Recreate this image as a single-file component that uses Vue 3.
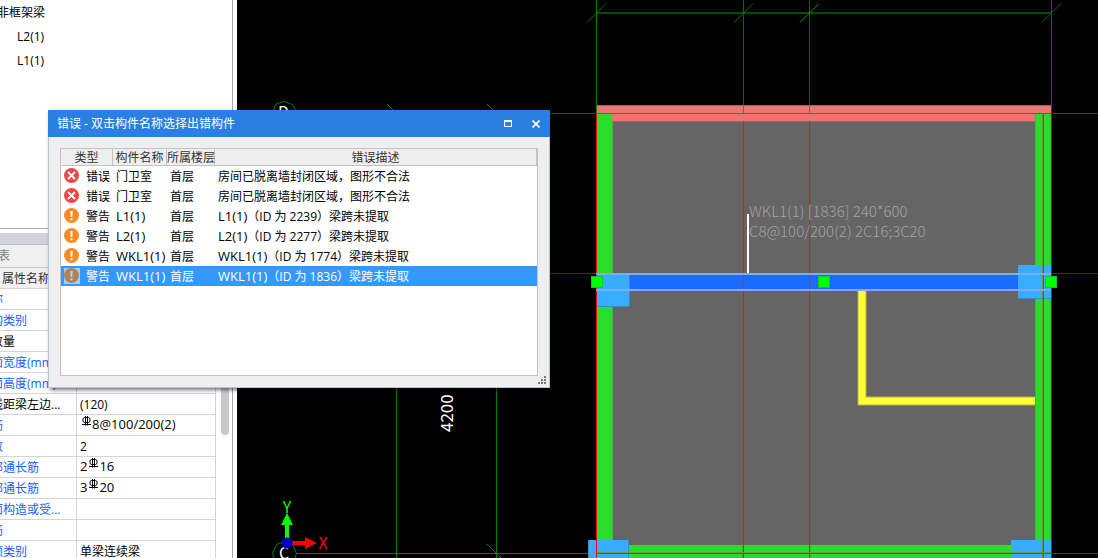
<script setup>
import { ref } from 'vue'

const tree = [
  { name: '非框架梁', level: 0 },
  { name: 'L2(1)', level: 1 },
  { name: 'L1(1)', level: 1 },
]

const properties = [
  { name: '名称', value: [], link: true },
  { name: '结构类别', value: [], link: true },
  { name: '跨数量', value: [] },
  { name: '截面宽度(mm)', value: [], link: true },
  { name: '截面高度(mm)', value: [], link: true },
  { name: '轴线距梁左边...', value: ['(120)'] },
  { name: '箍筋', value: ['', '8@100/200(2)'], link: true },
  { name: '肢数', value: ['2'], link: true },
  { name: '上部通长筋', value: ['2', '16'], link: true },
  { name: '下部通长筋', value: ['3', '20'], link: true },
  { name: '侧面构造或受...', value: [], link: true },
  { name: '拉筋', value: [], link: true },
  { name: '定额类别', value: ['单梁连续梁'], link: true },
]

const issues = [
  { kind: 'error', type: '错误', name: '门卫室', floor: '首层', text: ['', '房间已脱离墙封闭区域，图形不合法'] },
  { kind: 'error', type: '错误', name: '门卫室', floor: '首层', text: ['', '房间已脱离墙封闭区域，图形不合法'] },
  { kind: 'warn', type: '警告', name: 'L1(1)', floor: '首层', text: ['L1(1)', '（ID 为 2239）梁跨未提取'] },
  { kind: 'warn', type: '警告', name: 'L2(1)', floor: '首层', text: ['L2(1)', '（ID 为 2277）梁跨未提取'] },
  { kind: 'warn', type: '警告', name: 'WKL1(1)', floor: '首层', text: ['WKL1(1)', '（ID 为 1774）梁跨未提取'] },
  { kind: 'warn', type: '警告', name: 'WKL1(1)', floor: '首层', text: ['WKL1(1)', '（ID 为 1836）梁跨未提取'] },
]

const selected = ref(5)
const open = ref(true)
const axes = [596, 743, 809, 1051]
</script>

<template>
  <div class="app">
    <aside class="side">
      <ul class="tree">
        <li v-for="t in tree" :key="t.name" :class="'level' + t.level">{{ t.name }}</li>
      </ul>
      <div class="splitter"></div>
      <div class="props">
        <h2>属性列表</h2>
        <div class="scroller">
          <table>
            <thead>
              <tr><th>属性名称</th><th>属性值</th></tr>
            </thead>
            <tbody>
              <tr v-for="p in properties" :key="p.name">
                <td :class="{ link: p.link }">{{ p.name }}</td>
                <td>
                  <div v-if="p.value.length > 1" class="bars">
                    <span v-if="p.value[0]">{{ p.value[0] }}</span>
                    <svg class="rebar" width="11" height="11" viewBox="0 0 11 11" aria-hidden="true">
                      <path d="M3.500 1.500h4l1.500 1v3l-1.500 1h-4l-1.500-1v-3zM4.500 0v9.500M6.500 0v9.500M1 8.500h9" fill="none" stroke="#000" />
                    </svg>
                    <span>{{ p.value[1] }}</span>
                  </div>
                  <template v-else>{{ p.value[0] }}</template>
                </td>
              </tr>
            </tbody>
          </table>
          <div class="track"><div class="thumb"></div></div>
        </div>
      </div>
    </aside>

    <main class="canvas">
      <svg viewBox="237 0 861 558" preserveAspectRatio="xMinYMin slice">
        <g stroke="#008000" fill="none">
          <path d="M597 13H1051" stroke="#004d00" stroke-width="2" />
          <path v-for="x in axes" :key="x" :d="`M${x + 0.5} 0V114`" :stroke="x === 596 ? '#008000' : '#006c00'" />
          <path v-for="x in axes" :key="'t' + x" :d="`M${x - 9} 22.500L${x + 10} 3.500`" :stroke="x === 809 ? '#00a000' : '#007800'" />
          <path d="M297 113.500H596M1051 113.500H1098" stroke="#006c00" />
          <path d="M297 273.500H596M1051 273.500H1098" stroke="#005400" />
          <path d="M297 553.500H596" />
          <path d="M1051 553.500H1098" stroke="#006c00" />
          <path d="M396.500 113V558M496.500 113V558" />
          <path d="M387 104L406 123M487 104L506 123M487 544L506 563" />
          <path d="M284.500 101.500l-8 2-4 8v6M284.500 101.500l8 3 4 7v6" />
          <path d="M284.500 541.500l-8 3-4 9 3 9M284.500 541.500l8 3 4 9-3 9" />
        </g>
        <text x="278" y="118" class="mark">D</text>
        <text x="279" y="559" class="mark">C</text>

        <rect x="597" y="105" width="454" height="453" fill="#656565" />
        <rect x="597" y="105" width="454" height="16" fill="#eb7474" />
        <path d="M597 105.500H1051M612 121.500H1035" stroke="#a86060" />
        <rect x="597" y="113" width="15" height="445" fill="#2bdd2b" />
        <rect x="1035" y="113" width="16" height="445" fill="#2bdd2b" />
        <rect x="612" y="545" width="424" height="13" fill="#2bdd2b" />
        <path d="M612.500 121V545M1035.500 113V540M1050.500 113V540" stroke="#48ae48" fill="none" />
        <path d="M862 290V401H1035" stroke="#b5b14e" stroke-width="9" fill="none" />
        <path d="M862 290V401H1035" stroke="#ffff35" stroke-width="7" fill="none" />

        <g fill="#38adff">
          <rect x="597" y="274" width="33" height="32" />
          <rect x="1018" y="265" width="33" height="33" />
          <rect x="589" y="540" width="39" height="18" />
          <rect x="1011" y="540" width="40" height="18" />
        </g>
        <path d="M597 306.500H629.500V274M1018 298.500H1051M588.500 540V558M628.500 540V558" stroke="#3e89bd" fill="none" />
        <rect x="630" y="274" width="388" height="16" fill="#1a6bff" />
        <g stroke="#e01818" fill="none">
          <path d="M596.500 113V558" stroke="#ff0000" />
          <path d="M597 113.500H1051" stroke="#f52020" />
          <path d="M743.500 121V274M743.500 290V558M809.500 121V274M809.500 290V558" />
          <path d="M743.500 274V290M809.500 274V290" stroke="#8a3c98" />
          <path d="M742.500 121V558M810.500 121V558" stroke="#a83c3c" stroke-opacity=".3" />
          <path d="M743.500 105V113M809.500 105V113" stroke="#89633b" />
          <path d="M1042.500 114V558" stroke="#7c8a3a" />
          <path d="M1043.500 114V558" stroke="#c03520" />
          <path d="M1051.500 113V558" stroke="#b01818" />
          <path d="M597 552.500H1051" stroke="#6a9a40" />
          <path d="M597 553.500H1051" stroke="#b8331f" />
        </g>
        <path d="M596 274H1051M596 290H1051" stroke="#83a9ff" stroke-width="2" />
        <g fill="#00ff00" stroke="#10c830">
          <rect x="591.500" y="276.500" width="11" height="11" />
          <rect x="818.500" y="276.500" width="11" height="11" />
          <rect x="1045.500" y="276.500" width="11" height="11" />
        </g>
        <path d="M748 214V273" stroke="#fff" stroke-width="2" />
        <text x="749" y="217" class="note">WKL1(1) [1836] 240*600</text>
        <text x="749" y="237" class="note">C8@100/200(2) 2C16;3C20</text>
        <text transform="translate(453 432) rotate(-90)" class="dim">4200</text>

        <path d="M285 541V525h-4l6-12 6 12h-4v16z" fill="#00ff00" />
        <path d="M292 541h13v-4l12 6-12 6v-4h-13z" fill="#ff0000" />
        <circle cx="287" cy="543" r="5.500" fill="#0000c0" />
        <text x="287" y="513" class="axis y">Y</text>
        <text x="323" y="549" class="axis x">X</text>
      </svg>
    </main>

    <section v-if="open" class="dialog" role="dialog" aria-labelledby="dialog-title">
      <header>
        <h1 id="dialog-title">错误 - 双击构件名称选择出错构件</h1>
        <button type="button" aria-label="最大化">
          <svg width="8" height="7" viewBox="0 0 8 7"><path d="M.5 1v5.500h7V1" fill="none" stroke="#fff" /><path d="M0 1h8" stroke="#fff" stroke-width="2" /></svg>
        </button>
        <button type="button" aria-label="关闭" @click="open = false">
          <svg width="8" height="8" viewBox="0 0 8 8"><path d="M.5.5l7 7M7.500.5l-7 7" stroke="#fff" stroke-width="1.600" /></svg>
        </button>
      </header>
      <div class="body">
        <div class="list">
          <table>
            <colgroup><col class="c1"><col class="c2"><col class="c3"><col></colgroup>
            <thead>
              <tr><th>类型</th><th>构件名称</th><th>所属楼层</th><th>错误描述</th></tr>
            </thead>
            <tbody>
              <tr v-for="(r, i) in issues" :key="i" :class="{ selected: i === selected }" @click="selected = i">
                <td>
                  <div class="type">
                    <svg width="16" height="16" viewBox="0 0 16 16" aria-hidden="true">
                      <template v-if="r.kind === 'error'">
                        <circle cx="7.500" cy="7.500" r="7.500" fill="#f04545" />
                        <path d="M4 4l7 7M11 4l-7 7" stroke="#fff" stroke-width="1.800" />
                      </template>
                      <template v-else>
                        <rect v-if="i === selected" width="16" height="16" fill="#a9cdf0" />
                        <circle cx="7.500" cy="7.500" r="7.500" :fill="i === selected ? '#ac8459' : '#f68b27'" />
                        <path d="M6.300 3h2.400L8.300 9H6.700zM6.500 10.300h2v2h-2z" :fill="i === selected ? '#b9d3ee' : '#fff'" />
                      </template>
                    </svg>
                    <span>{{ r.type }}</span>
                  </div>
                </td>
                <td><span :class="{ code: r.kind === 'warn' }">{{ r.name }}</span></td>
                <td>{{ r.floor }}</td>
                <td><span v-if="r.text[0]" class="code">{{ r.text[0] }}</span>{{ r.text[1] }}</td>
              </tr>
            </tbody>
          </table>
        </div>
      </div>
      <svg class="grip" width="8" height="8" viewBox="0 0 8 8" fill="#777b80" aria-hidden="true">
        <path d="M6 0h2v2H6zM3 3h2v2H3zM6 3h2v2H6zM0 6h2v2H0zM3 6h2v2H3zM6 6h2v2H6z" />
      </svg>
    </section>
  </div>
</template>

<style>
body { margin: 0; overflow: hidden; }
</style>

<style scoped>
.app {
  position: relative;
  display: flex;
  height: 100vh;
  overflow: hidden;
  font: 12px/20px "Open Sans", "Noto Sans CJK SC", sans-serif;
  color: #000;
  background: #fff;
}
.side {
  display: flex;
  flex-direction: column;
  flex: 0 0 232px;
  margin-right: 4px;
  border-right: 1px solid #aaa;
  overflow: hidden;
}
.tree {
  flex: 0 0 228px;
  margin: 0 0 4px;
  padding: 0;
  list-style: none;
  border-bottom: 1px solid #aaa;
}
.tree li { height: 24px; line-height: 25px; }
.tree .level0 { margin-left: -3px; }
.tree .level1 { padding-left: 17px; }
.splitter { flex: 0 0 11px; background: #d0d3d9; border-bottom: 1px solid #b9bcc2; }
.props { flex: 1; min-height: 0; display: flex; flex-direction: column; }
.props h2 {
  flex: 0 0 21px;
  margin: 0 0 0 -38px;
  font-size: 12px;
  line-height: 22px;
  font-weight: 400;
  color: #7d7d7d;
  background: #f0f0f0;
  border-bottom: 1px solid #c8c8c8;
}
.scroller { display: flex; flex: 1; min-height: 0; overflow: hidden; }
.scroller table {
  width: 254px;
  flex: none;
  margin-left: -38px;
  border-collapse: separate;
  border-spacing: 0;
  table-layout: fixed;
  align-self: flex-start;
}
.scroller th, .scroller td {
  box-sizing: border-box;
  height: 21px;
  padding: 1px 0 0 17px;
  line-height: 19px;
  text-align: left;
  font-weight: 400;
  white-space: nowrap;
  overflow: hidden;
  border: 0 solid #d4d4d4;
  border-width: 0 1px 1px 0;
}
.scroller th { padding-left: 40px; background: #f0f0f0; color: #333; }
.scroller th:first-child { width: 115px; }
.scroller td + td { padding-left: 3px; }
.link { color: #1a5cff; }
.bars { display: flex; font-size: 13px; line-height: 16px; height: 19px; }
.rebar { margin-left: 1px; }
.track { width: 8px; margin-left: 5px; }
.thumb { height: 167px; border-radius: 4px; background: #c9c9c9; }

.canvas { flex: 1; min-width: 0; background: #000; }
.canvas svg { display: block; width: 100%; height: 100%; }
.canvas text { font-family: "Noto Sans CJK SC", sans-serif; }
.mark { font-size: 16px; fill: #fff; }
.note { font-size: 15px; fill: #a4a4a4; font-weight: 300; }
.dim { font-size: 17px; fill: #fff; }
.axis { font-size: 16px; text-anchor: middle; }
.axis.x { fill: #f00; }
.axis.y { fill: #0f0; }

.dialog {
  position: absolute;
  left: 48px;
  top: 110px;
  width: 502px;
  height: 278px;
  display: flex;
  flex-direction: column;
  background: #efefef;
  box-shadow: 2px 2px 4px rgba(0, 0, 0, .55);
}
.dialog header {
  display: flex;
  align-items: center;
  flex: 0 0 27px;
  background: #2b7fe2;
  color: #fff;
}
.dialog h1 { flex: 1; margin: 0; padding-left: 9px; font-size: 12px; font-weight: 400; }
.dialog button {
  display: flex;
  align-items: center;
  justify-content: center;
  width: 28px;
  height: 26px;
  margin: 0;
  padding: 0;
  border: 0;
  background: none;
}
.body {
  flex: 1;
  display: flex;
  padding: 11px;
  border: 1px solid #b9c4d3;
  border-top: 0;
}
.list { flex: 1; background: #fff; border: 1px solid #c2c2c2; }
.list table { width: 100%; border-collapse: separate; border-spacing: 0; table-layout: fixed; }
.c1 { width: 52px; }
.c2 { width: 54px; }
.c3 { width: 48px; }
.list th {
  box-sizing: border-box;
  height: 17px;
  padding: 2px 0 0;
  font-weight: 400;
  line-height: 14px;
  white-space: nowrap;
  color: #333;
  background: #efefef;
  border: 0 solid #c2c2c2;
  border-width: 0 1px 1px 0;
}
.list td { height: 18px; padding: 2px 0 0 3px; line-height: 18px; white-space: nowrap; }
.code { font-size: 13px; line-height: 16px; }
.type { display: flex; align-items: center; gap: 6px; }
.type svg { margin-bottom: 2px; }
.selected { background: #3399ff; color: #fff; }
.grip { position: absolute; right: 4px; bottom: 4px; }
</style>
